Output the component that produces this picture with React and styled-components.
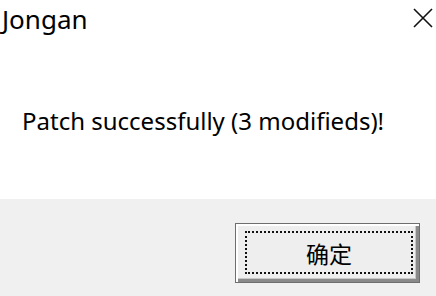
import React from 'react'
import styled, { createGlobalStyle } from "styled-components";

const GlobalStyle = createGlobalStyle`
  html, body {
    margin: 0;
    padding: 0;
    background: white;
  }
  body {
    font-family: "Noto Sans", "Noto Sans CJK SC", sans-serif;
  }
`;

const StyledDialog = styled.div`
  width: 436px;
  height: 296px;
  display: flex;
  flex-direction: column;
  background-color: white;
  overflow: hidden;
`;

const StyledTitleBar = styled.div`
  height: 40px;
  display: flex;
  align-items: flex-start;
  justify-content: space-between;
`;

const StyledTitle = styled.div`
  font-size: 26px;
  line-height: 1;
  color: #000;
  padding: 6px 0 0 2px;
`;

const StyledClose = styled.button`
  width: 40px;
  height: 36px;
  border: none;
  background: transparent;
  padding: 8px 3px 0 0;
  display: flex;
  align-items: flex-start;
  justify-content: flex-end;
`;

const StyledBody = styled.div`
  flex: 1;
  padding: 69px 0 0 22px;
  font-size: 24px;
  line-height: 1;
  color: #000;
`;

const StyledFooter = styled.div`
  height: 97px;
  background-color: #f0f0f0;
  display: flex;
  justify-content: flex-end;
  align-items: flex-start;
  padding: 24px 16px 0 0;
  box-sizing: border-box;
`;

const StyledButton = styled.button`
  width: 185px;
  height: 60px;
  box-sizing: border-box;
  border: 1px solid #6e6e6e;
  background-color: #eeeeee;
  box-shadow: inset 2px 2px 0 #ffffff, inset -3px -3px 0 #8a8a8a, inset -4px -4px 0 #c8c8c8;
  padding: 7px 6px 8px 9px;
  font-family: "Noto Sans CJK SC", sans-serif;
  font-size: 23px;
  color: #000;
`;

const StyledFocus = styled.div`
  height: 100%;
  box-sizing: border-box;
  border: 2px dotted #111;
  display: flex;
  align-items: center;
  justify-content: center;
`;

function App() {
    return (
        <StyledDialog>
            <GlobalStyle />
            <StyledTitleBar>
                <StyledTitle>Jongan</StyledTitle>
                <StyledClose>
                    <svg width="20" height="20" viewBox="0 0 20 20">
                        <path d="M1 1 L19 19 M19 1 L1 19" stroke="#111" strokeWidth="1.6" fill="none" />
                    </svg>
                </StyledClose>
            </StyledTitleBar>
            <StyledBody>Patch successfully (3 modifieds)!</StyledBody>
            <StyledFooter>
                <StyledButton>
                    <StyledFocus>确定</StyledFocus>
                </StyledButton>
            </StyledFooter>
        </StyledDialog>
    )
}

export default App
